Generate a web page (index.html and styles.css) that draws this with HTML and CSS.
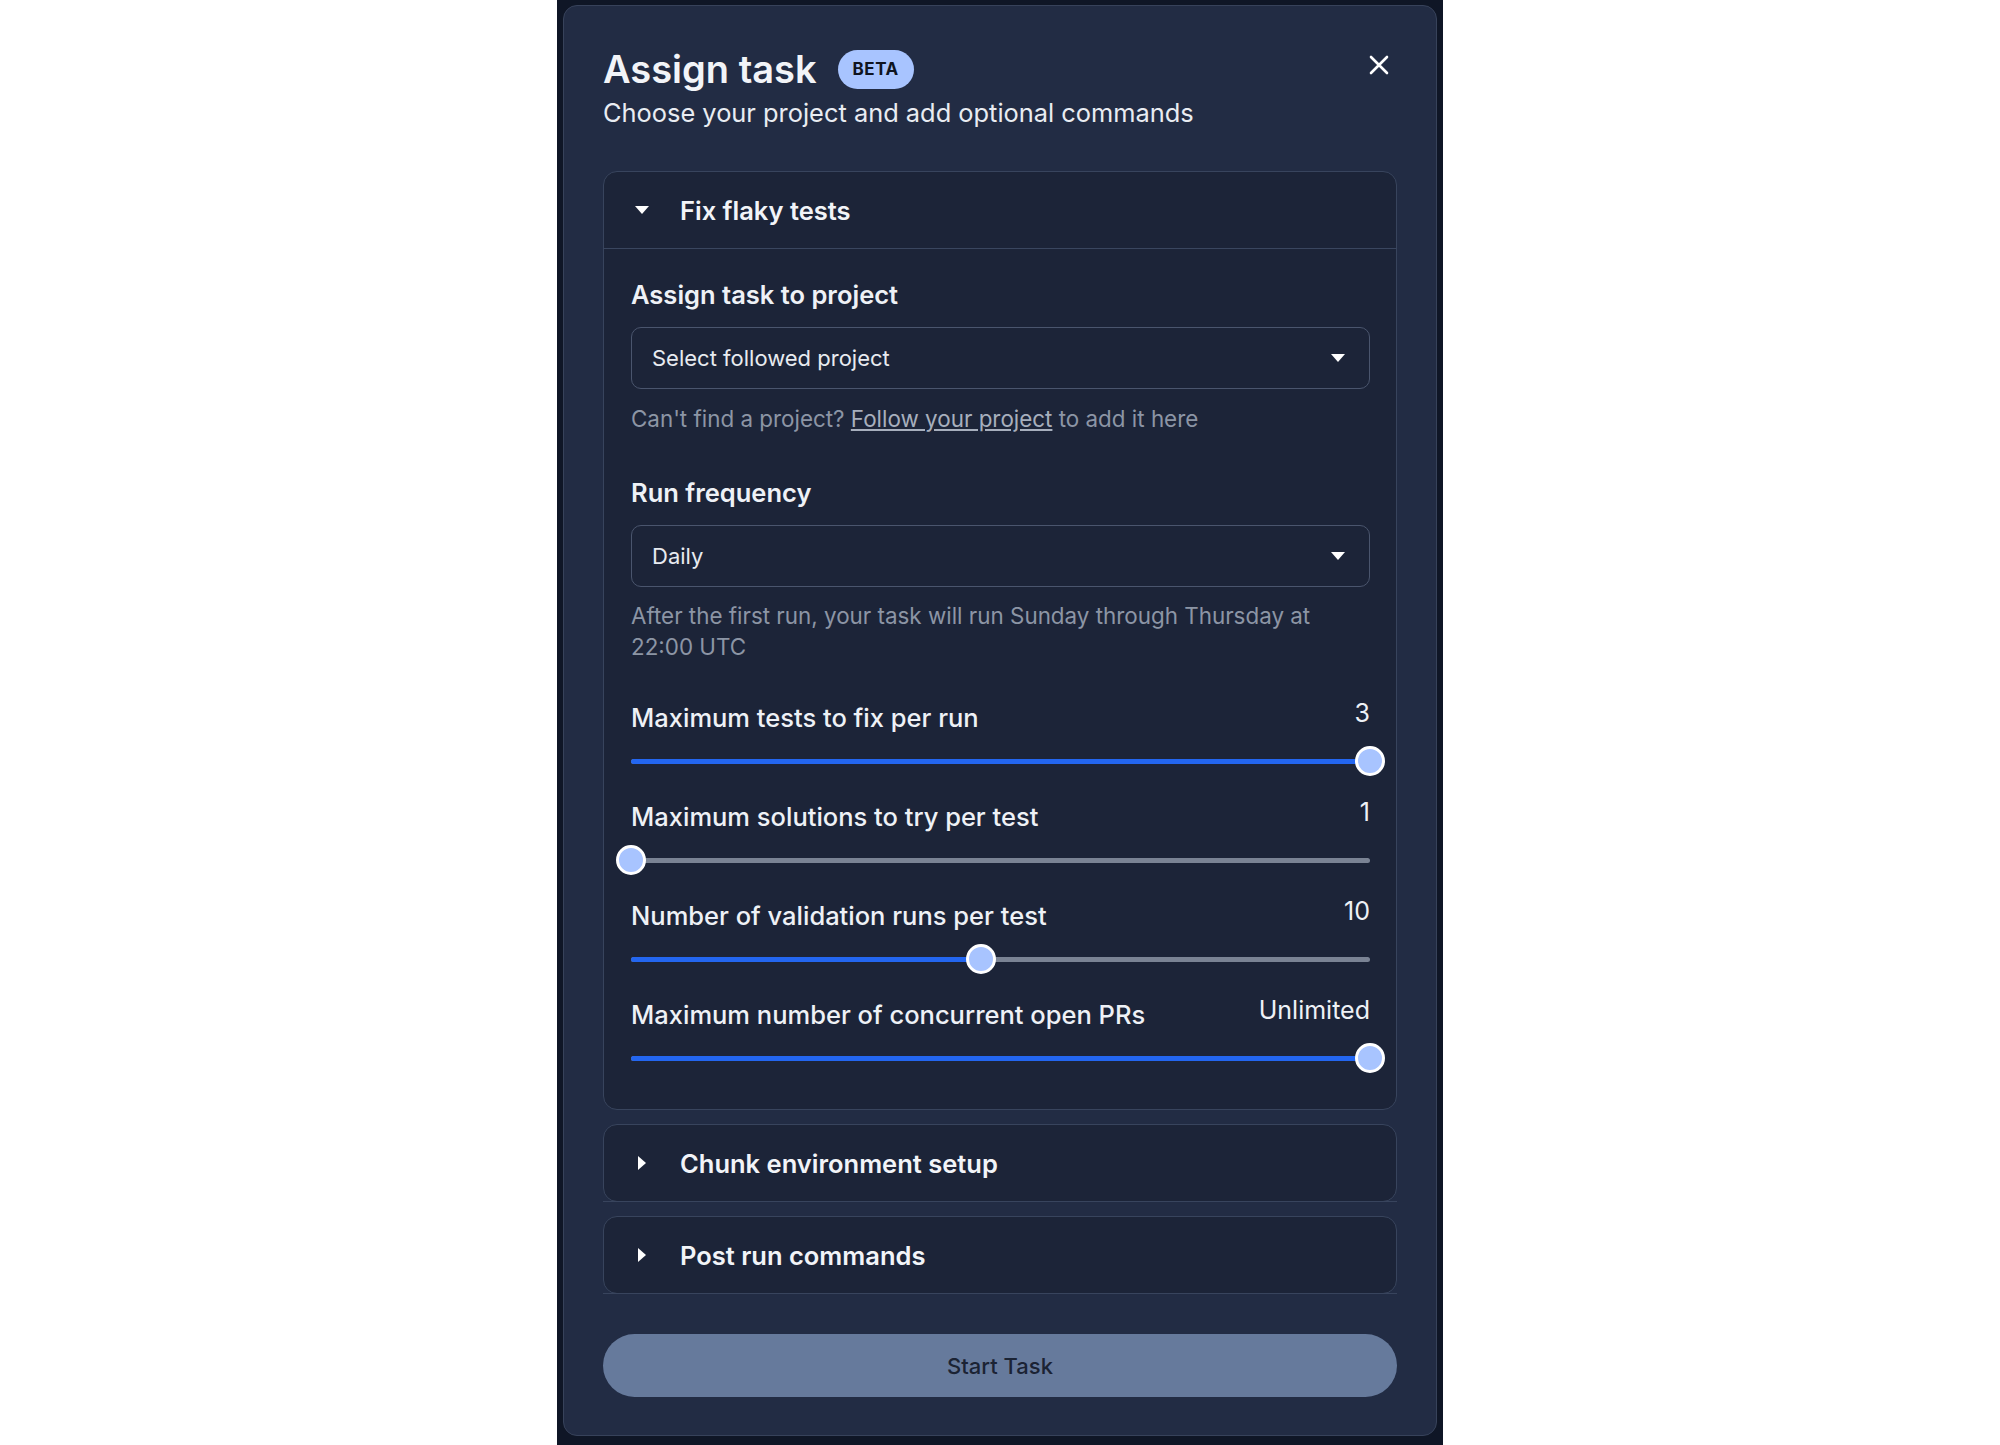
FILE: index.html
```html
<!DOCTYPE html>
<html>
  <head>
    <link rel="stylesheet" href="styles.css">
  </head>

  <body>
    <div class="backdrop">
      <div class="modal">
        <div class="modalhead">
          <div>
            <div class="titlerow">
              <h1 class="title">Assign task</h1>
              <span class="badge">BETA</span>
            </div>
            <div class="subtitle">Choose your project and add optional commands</div>
          </div>
          <button class="closebtn">
            <svg width="20" height="20" viewBox="0 0 20 20">
              <path d="M2 2 L18 18 M18 2 L2 18" stroke="#ffffff" stroke-width="2.6" stroke-linecap="round" fill="none"/>
            </svg>
          </button>
        </div>

        <div class="card">
          <div class="cardhead open">
            <span class="caretdown"></span>
            <span class="cardtitle">Fix flaky tests</span>
          </div>

          <div class="cardbody">
            <div class="fieldlabel">Assign task to project</div>
            <div class="select">
              <span>Select followed project</span>
              <span class="selectarrow"></span>
            </div>
            <div class="help">Can't find a project? <a href="#" class="helplink">Follow your project</a> to add it here</div>

            <div class="fieldlabel spaced">Run frequency</div>
            <div class="select">
              <span>Daily</span>
              <span class="selectarrow"></span>
            </div>
            <div class="help tight">After the first run, your task will run Sunday through Thursday at 22:00 UTC</div>

            <div class="slider first">
              <div class="sliderhead">
                <span class="sliderlabel">Maximum tests to fix per run</span>
                <span class="slidervalue">3</span>
              </div>
              <div class="sliderbar">
                <div class="track"><div class="fill" style="width: 100%"></div></div>
                <div class="thumb" style="left: 100%"></div>
              </div>
            </div>

            <div class="slider">
              <div class="sliderhead">
                <span class="sliderlabel">Maximum solutions to try per test</span>
                <span class="slidervalue">1</span>
              </div>
              <div class="sliderbar">
                <div class="track"><div class="fill" style="width: 0%"></div></div>
                <div class="thumb" style="left: 0%"></div>
              </div>
            </div>

            <div class="slider">
              <div class="sliderhead">
                <span class="sliderlabel">Number of validation runs per test</span>
                <span class="slidervalue">10</span>
              </div>
              <div class="sliderbar">
                <div class="track"><div class="fill" style="width: 47.4%"></div></div>
                <div class="thumb" style="left: 47.4%"></div>
              </div>
            </div>

            <div class="slider">
              <div class="sliderhead">
                <span class="sliderlabel">Maximum number of concurrent open PRs</span>
                <span class="slidervalue">Unlimited</span>
              </div>
              <div class="sliderbar">
                <div class="track"><div class="fill" style="width: 100%"></div></div>
                <div class="thumb" style="left: 100%"></div>
              </div>
            </div>
          </div>
        </div>

        <div class="card collapsed">
          <div class="cardhead">
            <span class="caretright"></span>
            <span class="cardtitle">Chunk environment setup</span>
          </div>
        </div>

        <div class="card collapsed">
          <div class="cardhead">
            <span class="caretright"></span>
            <span class="cardtitle">Post run commands</span>
          </div>
        </div>

        <button class="startbtn">Start Task</button>
      </div>
    </div>
  </body>
</html>
```

FILE: styles.css
```css
body {
  font-family: Inter, "Noto Sans", sans-serif;
  margin: 0;
  background-color: white;
  display: flex;
  justify-content: center;
}

.backdrop {
  width: 886px;
  min-height: 1445px;
  box-sizing: border-box;
  background-color: #0f1626;
  padding: 5px 6px 7px 6px;
}

.modal {
  background-color: #222c44;
  border: 1px solid #37425a;
  border-radius: 14px;
  padding: 40px 39px 38px 39px;
}

.modalhead {
  display: flex;
  justify-content: space-between;
  align-items: flex-start;
}

.titlerow {
  display: flex;
  align-items: center;
}

.title {
  margin: 0;
  font-size: 38px;
  line-height: 46px;
  font-weight: 600;
  color: #f2f4f8;
}

.badge {
  margin-left: 21px;
  height: 39px;
  padding: 0 15px;
  border-radius: 20px;
  background-color: #a8c4ff;
  color: #0f1420;
  font-size: 17px;
  font-weight: 700;
  letter-spacing: 0.5px;
  display: flex;
  align-items: center;
}

.subtitle {
  margin-top: 5px;
  font-size: 25.4px;
  line-height: 32px;
  color: #e9ecf2;
}

.closebtn {
  background: none;
  border: none;
  padding: 0;
  margin: 9px 8px 0 0;
  width: 20px;
  height: 20px;
  display: flex;
}

.card {
  margin-top: 42px;
  background-color: #1c2438;
  border: 1px solid #38445d;
  border-radius: 14px;
}

.card.collapsed {
  margin-top: 14px;
}

.cardhead {
  height: 77px;
  box-sizing: border-box;
  display: flex;
  align-items: center;
  padding-left: 32px;
  margin: 0 -1px -1px -1px;
  border-bottom: 1px solid #38445d;
}

.cardhead.open {
  height: 77px;
  margin: 0 -1px;
  border-bottom: 1px solid #3a465f;
}

.cardtitle {
  font-size: 25.5px;
  font-weight: 600;
  color: #f2f4f8;
  margin-left: 31px;
}

.caretdown {
  width: 0;
  height: 0;
  border-left: 7px solid transparent;
  border-right: 7px solid transparent;
  border-top: 8px solid #ffffff;
}

.caretright {
  width: 0;
  height: 0;
  margin: 0 3px;
  border-top: 7px solid transparent;
  border-bottom: 7px solid transparent;
  border-left: 8px solid #ffffff;
}

.cardbody {
  padding: 30px 26px 36px 27px;
}

.fieldlabel {
  font-size: 25.5px;
  line-height: 32px;
  font-weight: 600;
  color: #eef1f6;
}

.fieldlabel.spaced {
  margin-top: 43px;
}

.select {
  margin-top: 16px;
  height: 62px;
  box-sizing: border-box;
  border: 1px solid #4a556d;
  border-radius: 10px;
  padding: 0 24px 0 20px;
  display: flex;
  justify-content: space-between;
  align-items: center;
  font-size: 22px;
  color: #e8ebf0;
}

.selectarrow {
  width: 0;
  height: 0;
  border-left: 7px solid transparent;
  border-right: 7px solid transparent;
  border-top: 8px solid #ffffff;
}

.help {
  margin-top: 15px;
  font-size: 22.4px;
  line-height: 30px;
  color: #8c95a5;
}

.help.tight {
  margin-top: 13px;
  line-height: 31px;
}

.helplink {
  color: #a7afbd;
  text-decoration: underline;
}

.slider {
  margin-top: 25px;
}

.slider.first {
  margin-top: 40px;
}

.sliderhead {
  display: flex;
  justify-content: space-between;
  align-items: flex-start;
}

.sliderlabel {
  font-size: 25.5px;
  line-height: 32px;
  font-weight: 500;
  color: #eef1f6;
}

.slidervalue {
  font-size: 25px;
  line-height: 32px;
  color: #eef1f6;
  margin-top: -5px;
}

.sliderbar {
  position: relative;
  margin-top: 12px;
  height: 30px;
  display: flex;
  align-items: center;
}

.track {
  width: 100%;
  height: 5px;
  border-radius: 3px;
  background-color: #7a8394;
}

.fill {
  height: 100%;
  border-radius: 3px;
  background-color: #2366f0;
}

.thumb {
  position: absolute;
  top: 0;
  width: 30px;
  height: 30px;
  margin-left: -15px;
  box-sizing: border-box;
  border: 3px solid #ffffff;
  border-radius: 50%;
  background-color: #a8c4ff;
}

.startbtn {
  margin-top: 40px;
  width: 100%;
  height: 63px;
  border: none;
  border-radius: 32px;
  background-color: #667a9c;
  color: #1b2334;
  font-family: Inter, "Noto Sans", sans-serif;
  font-size: 22px;
  font-weight: 500;
}
```
